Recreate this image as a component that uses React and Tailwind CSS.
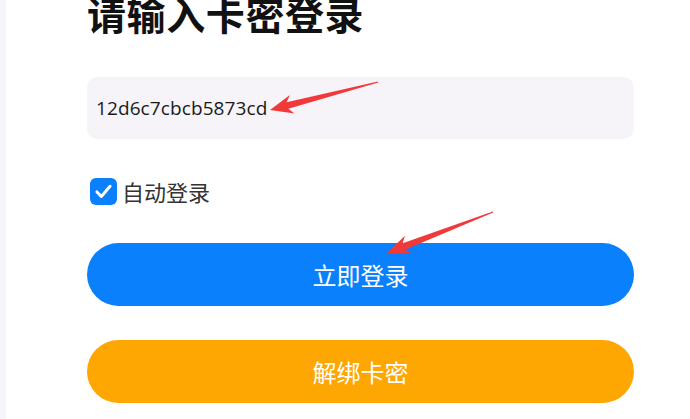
import React from "react";

function arrowPoints(tx, ty, hx, hy, headLen = 23, headHalf = 9.5, neck = 3.4, tail = 0.6) {
  const dx = hx - tx, dy = hy - ty;
  const L = Math.hypot(dx, dy);
  const ux = dx / L, uy = dy / L;
  const nx = -uy, ny = ux;
  const bx = hx - ux * headLen, by = hy - uy * headLen;
  const nbx = hx - ux * (headLen - 5), nby = hy - uy * (headLen - 5);
  const p = [
    [tx + nx * tail, ty + ny * tail],
    [nbx + nx * neck, nby + ny * neck],
    [bx + nx * headHalf, by + ny * headHalf],
    [hx, hy],
    [bx - nx * headHalf, by - ny * headHalf],
    [nbx - nx * neck, nby - ny * neck],
    [tx - nx * tail, ty - ny * tail],
  ];
  return p.map(([x, y]) => `${x.toFixed(1)},${y.toFixed(1)}`).join(" ");
}

export default function App() {
  const cjk = { fontFamily: '"Noto Sans CJK SC", "Noto Sans", sans-serif' };
  return (
    <div className="relative flex h-[419px] w-[690px] overflow-hidden bg-white">
      <div className="h-full w-[6px] bg-[#f4f5fa]" />
      <div className="flex w-[547px] flex-col pl-[81px] box-content">
        <h1
          className="mt-[-6px] text-[39px] font-bold leading-[39px] tracking-[0.6px] text-[#111]"
          style={cjk}
        >
          请输入卡密登录
        </h1>
        <div className="mt-[44px] flex h-[62px] items-center rounded-[10px] bg-[#f6f4f8] px-[9px]">
          <span
            className="text-[19px] tracking-[0.1px] text-[#1a1a1a]"
            style={{ fontFamily: '"Open Sans", "Noto Sans", sans-serif' }}
          >
            12d6c7cbcb5873cd
          </span>
        </div>
        <div className="mt-[39px] flex items-center gap-[5px] pl-[3px]">
          <div className="flex h-[27px] w-[27px] items-center justify-center rounded-[6px] bg-[#0a80fd]">
            <svg width="21" height="21" viewBox="0 0 24 24" fill="none">
              <path d="M4.5 12.5l5 5.2L19.5 6" stroke="white" strokeWidth="3.4" strokeLinecap="round" strokeLinejoin="round" />
            </svg>
          </div>
          <span className="text-[22px] leading-[27px] text-[#333]" style={cjk}>
            自动登录
          </span>
        </div>
        <button
          className="mt-[38px] flex h-[63px] items-center justify-center rounded-full bg-[#0a80fd] text-[24px] text-white"
          style={cjk}
        >
          立即登录
        </button>
        <button
          className="mt-[34px] flex h-[63px] items-center justify-center rounded-full bg-[#fea601] text-[24px] text-white"
          style={cjk}
        >
          解绑卡密
        </button>
      </div>
      <svg className="pointer-events-none absolute left-0 top-0" width="690" height="419">
        <polygon points={arrowPoints(378, 82, 270, 110)} fill="#f03a3a" />
        <polygon points={arrowPoints(493, 212, 387, 253)} fill="#f03a3a" />
      </svg>
    </div>
  );
}
